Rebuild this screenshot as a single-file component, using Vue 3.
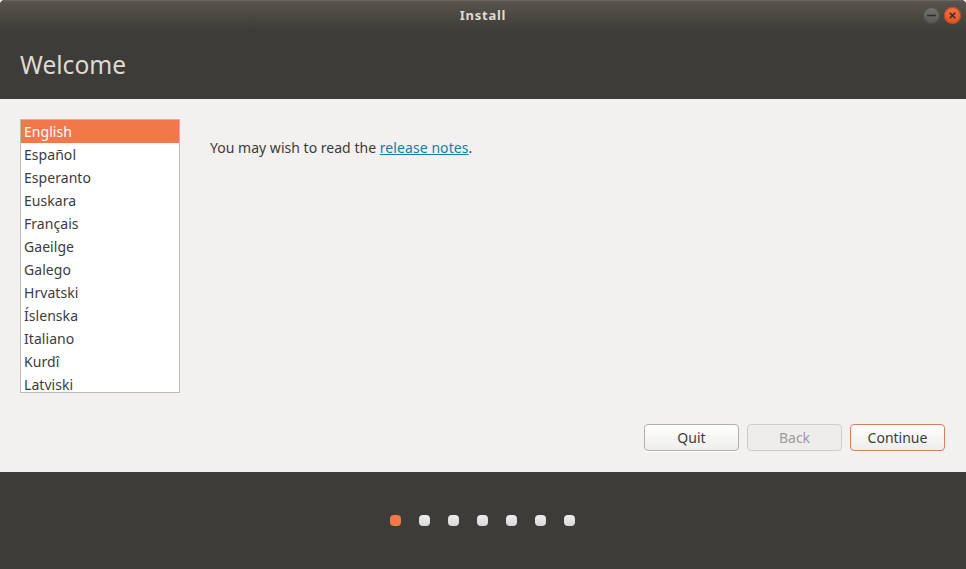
<script setup>
const languages = ['English','Español','Esperanto','Euskara','Français','Gaeilge','Galego','Hrvatski','Íslenska','Italiano','Kurdî','Latviski']
const dots = [0,1,2,3,4,5,6]
</script>

<template>
  <div class="window">
    <div class="top">
      <div class="titlebar">
        <span class="title">Install</span>
        <div class="controls">
          <span class="ctl min"><svg width="17" height="17" viewBox="0 0 17 17"><path d="M4 8.5h9" stroke="#2e2d2a" stroke-width="1.4"/></svg></span>
          <span class="ctl close"><svg width="17" height="17" viewBox="0 0 17 17"><path d="M5.7 5.7l5.6 5.6M11.3 5.7l-5.6 5.6" stroke="#3a2a20" stroke-width="1.4"/></svg></span>
        </div>
      </div>
      <h1 class="heading">Welcome</h1>
    </div>
    <div class="content">
      <div class="main">
        <ul class="list">
          <li v-for="(l,i) in languages" :key="l" :class="{selected:i===0}">{{ l }}</li>
        </ul>
        <p class="notes">You may wish to read the <a>release notes</a>.</p>
      </div>
      <div class="buttons">
        <button class="btn">Quit</button>
        <button class="btn disabled">Back</button>
        <button class="btn primary">Continue</button>
      </div>
    </div>
    <div class="footer">
      <span v-for="d in dots" :key="d" class="dot" :class="{active:d===0}"></span>
    </div>
  </div>
</template>

<style scoped>
.window{width:966px;height:569px;display:flex;flex-direction:column;font-family:"Noto Sans","Open Sans",sans-serif;font-size:14px;color:#3c3c3c;overflow:hidden;border-radius:5px 5px 0 0;background:#3d3c38}
.top{height:99px;background:#3d3c38;flex:none}
.titlebar{height:30px;display:flex;align-items:center;justify-content:center;position:relative;background:linear-gradient(#5a564e 0,#55514a 3px,#3f3d39 29px);border-top:1px solid #6a665e;box-sizing:border-box;padding-bottom:2px}
.title{color:#dfdbd2;font-size:13px;letter-spacing:.75px;font-weight:700;font-family:"Noto Sans",sans-serif}
.controls{position:absolute;right:5px;top:6px;display:flex;gap:4px}
.ctl{width:17px;height:17px;border-radius:50%;display:block}
.min{background:linear-gradient(#75736d,#595752);box-shadow:inset 0 0 0 1px #4a4945}
.close{background:linear-gradient(#f0754a,#e0521f);box-shadow:inset 0 0 0 1px #b5481f}
.heading{margin:0;padding:18px 0 0 20px;font-size:24.6px;line-height:34px;font-weight:400;color:#dfdbd2}
.content{height:373px;flex:none;background:#f2f1f0;display:flex;flex-direction:column;box-sizing:border-box;padding:20px 21px 21px 20px}
.main{flex:1;display:flex;min-height:0}
.list{margin:0;padding:0;list-style:none;width:160px;height:274px;box-sizing:border-box;border:1px solid #bdb9b5;background:#fff;overflow:hidden;flex:none}
.list li{height:23px;line-height:23px;padding-left:3px;font-size:14px;letter-spacing:.05px;color:#3c3c3c}
.list li.selected{background:#f2784a;color:#fff}
.notes{margin:18px 0 0 30px;line-height:22px;color:#3c3c3c;font-size:14px;letter-spacing:.02px}
.notes a{color:#0f7fa8;text-decoration:underline;letter-spacing:.08px}
.buttons{display:flex;justify-content:flex-end;gap:8px;flex:none}
.btn{width:95px;height:27px;box-sizing:border-box;border:1px solid #b3aea8;border-radius:4px;background:linear-gradient(#ffffff,#ededeb);font:inherit;font-size:14px;color:#3c3c3c;padding:0;box-shadow:0 1px 0 #fff}
.btn.disabled{background:#eeedec;border-color:#cfcdca;color:#9b9b99;box-shadow:none}
.btn.primary{border-color:#d9805a}
.footer{flex:1;background:#3d3c38;display:flex;align-items:center;justify-content:center;gap:18px;padding-right:1px}
.dot{width:11px;height:11px;border-radius:4px;background:linear-gradient(#eeeeec,#d8d8d6)}
.dot.active{background:#f2784a}
</style>

<style>
html,body{margin:0;background:#f2f1f0}
</style>
